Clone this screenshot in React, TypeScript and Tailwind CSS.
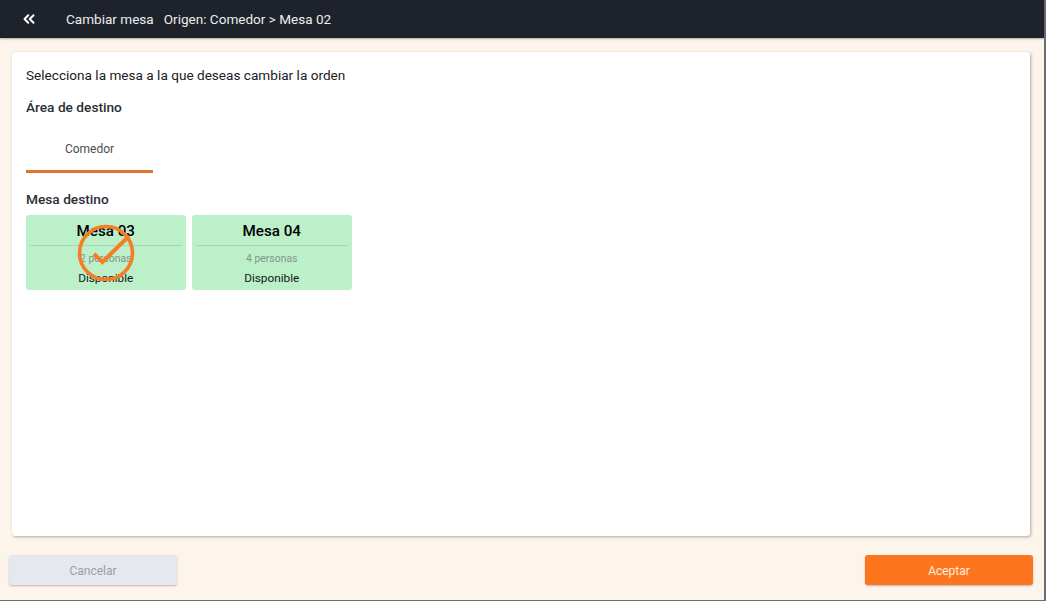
import { ChevronsLeft } from "lucide-react";

const FONT = "font-['Roboto','Liberation_Sans',sans-serif]";

function TableCard({ name, people, selected }: { name: string; people: string; selected?: boolean }) {
    return (
        <div className="relative flex h-[75px] w-[159.5px] flex-col items-center rounded-[3px] bg-[#bbf0c8] px-1">
            <div className="flex h-[31px] w-full items-center justify-center border-b border-[#a3d8b2] pt-[3px] text-[15.2px] font-medium text-black">
                {name}
            </div>
            <div className="mt-[6px] text-[10.4px] leading-[13px] text-[#83968a]">{people}</div>
            <div className="mt-[5px] text-[11.8px] leading-[16px] text-[#14191a]">Disponible</div>
            {selected && (
                <svg className="absolute left-[50px] top-[8px]" width="60" height="60" viewBox="0 0 60 60" fill="none">
                    <circle cx="30" cy="30" r="26.5" stroke="#f67d27" strokeWidth="3.6" />
                    <path d="M18 31 L26.5 39 L53 13" stroke="#f67d27" strokeWidth="4" />
                </svg>
            )}
        </div>
    );
}

export default function App() {
    return (
        <div className={`${FONT} h-[601px] w-[1046px] overflow-hidden bg-[#6e6e6e] pb-px pr-[2px]`}>
            <div className="flex h-full flex-col bg-[#fdf4ec]">
                {/* Top bar */}
                <header className="flex h-[38px] shrink-0 items-center bg-[#1e222b] text-[13.55px] text-[#eceded] shadow-[0_1px_2px_rgba(0,0,0,0.3)]">
                    <ChevronsLeft size={18} strokeWidth={2.6} className="ml-[20px] text-white" />
                    <span className="ml-[28px]">Cambiar mesa</span>
                    <span className="ml-[10px]">Origen: Comedor &gt; Mesa 02</span>
                </header>

                {/* Main card */}
                <main className="mx-[12px] mt-[14px] mr-[14px] flex h-[484px] flex-col rounded-[3px] bg-white px-[14px] pt-[13px] shadow-[1px_1px_3px_rgba(90,70,50,0.45)]">
                    <p className="text-[13.6px] leading-[20px] text-[#1d2024]">Selecciona la mesa a la que deseas cambiar la orden</p>
                    <h2 className="mt-[12px] text-[13.7px] font-medium leading-[20px] text-[#2b2e35]">Área de destino</h2>
                    <div className="mt-[11px] flex h-[45px] w-[127px] items-center justify-center border-b-[3px] border-[#d9752f] text-[12px] text-[#4a4d52]">
                        Comedor
                    </div>
                    <h2 className="mt-[16px] text-[13.7px] font-medium leading-[20px] text-[#2b2e35]">Mesa destino</h2>
                    <div className="mt-[6px] flex gap-[6.5px]">
                        <TableCard name="Mesa 03" people="2 personas" selected />
                        <TableCard name="Mesa 04" people="4 personas" />
                    </div>
                </main>

                {/* Footer actions */}
                <footer className="mt-[19px] flex justify-between pl-[9px] pr-[11px]">
                    <button className="h-[30px] w-[168px] rounded-[3px] bg-[#e6e8ef] pt-[2px] text-[12px] text-[#9b9ea5] shadow-[0_1px_2px_rgba(0,0,0,0.25)]">
                        Cancelar
                    </button>
                    <button className="h-[30px] w-[168px] rounded-[3px] bg-[#fd761d] pt-[2px] text-[12px] text-[#ffeee0] shadow-[0_1px_2px_rgba(0,0,0,0.25)]">
                        Aceptar
                    </button>
                </footer>
            </div>
        </div>
    );
}
